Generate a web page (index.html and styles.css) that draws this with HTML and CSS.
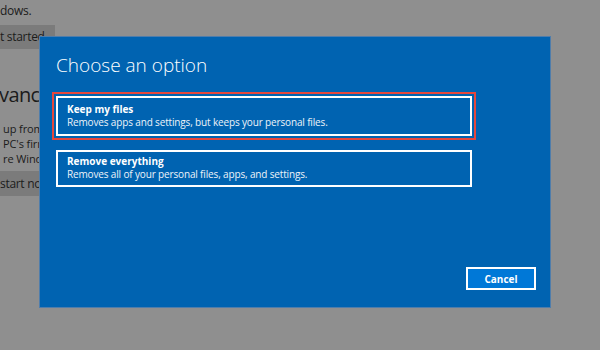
FILE: index.html
```html
<!DOCTYPE html>
<html>
<head>
<meta charset="utf-8">
<link rel="stylesheet" href="styles.css">
</head>
<body>
<div class="page">
  <p class="line">dows.</p>
  <div class="btn-row"><span class="gray-btn">t started</span></div>
  <h2 class="heading">vance</h2>
  <p class="para">up from<br>PC's firm<br>re Wind</p>
  <div class="btn-row2"><span class="gray-btn2">start now</span></div>
</div>

<div class="dialog">
  <h1 class="title">Choose an option</h1>
  <div class="focus-ring">
    <div class="option first">
      <div class="opt-title">Keep my files</div>
      <div class="opt-desc">Removes apps and settings, but keeps your personal files.</div>
    </div>
  </div>
  <div class="option second">
    <div class="opt-title">Remove everything</div>
    <div class="opt-desc">Removes all of your personal files, apps, and settings.</div>
  </div>
  <div class="footer">
    <button class="cancel">Cancel</button>
  </div>
</div>
</body>
</html>
```

FILE: styles.css
```css
html, body {
  margin: 0;
  padding: 0;
  width: 600px;
  height: 350px;
  overflow: hidden;
}
body {
  background: #8f8f8f;
  font-family: "Open Sans", "Noto Sans", sans-serif;
  color: #1b1b1b;
  position: relative;
}
.page {
  width: 60px;
  overflow: hidden;
  display: flex;
  flex-direction: column;
  align-items: flex-start;
}
.line {
  margin: 3px 0 0;
  font-size: 12px;
  line-height: 15px;
  letter-spacing: -0.3px;
  white-space: nowrap;
}
.btn-row {
  margin-top: 6px;
}
.gray-btn {
  display: inline-block;
  background: #7b7b7b;
  font-size: 12px;
  line-height: 15px;
  letter-spacing: -0.3px;
  padding: 4px 10px 5px 0;
  white-space: nowrap;
}
.heading {
  margin: 32px 0 0 -1px;
  font-size: 20px;
  line-height: 28px;
  font-weight: 400;
  letter-spacing: -0.6px;
  white-space: nowrap;
}
.para {
  margin: 12px 0 0 3px;
  font-size: 11px;
  line-height: 15px;
  letter-spacing: -0.1px;
  white-space: nowrap;
}
.btn-row2 {
  margin-top: 5px;
}
.gray-btn2 {
  display: inline-block;
  background: #7b7b7b;
  font-size: 12px;
  line-height: 15px;
  letter-spacing: -0.3px;
  padding: 5px 30px 5px 0;
  white-space: nowrap;
}

.dialog {
  position: absolute;
  left: 39px;
  top: 36px;
  width: 512px;
  height: 272px;
  box-sizing: border-box;
  background: #0063b1;
  border: 1px solid #4f7dab;
  display: flex;
  flex-direction: column;
  padding: 15px 14px 17px 12px;
  color: #fff;
}
.title {
  margin: 0 0 14px 4px;
  font-size: 19px;
  line-height: 26px;
  font-weight: 300;
  white-space: nowrap;
}
.focus-ring {
  width: 424px;
  box-sizing: border-box;
  border: 2px solid #e6473c;
  padding: 2px;
}
.option {
  box-sizing: border-box;
  width: 416px;
  border: 2px solid #ffffff;
  padding: 5px 9px;
}
.option.second {
  margin: 10px 0 0 4px;
  padding: 3px 9px 4px;
}
.opt-title {
  font-size: 10px;
  line-height: 13px;
  font-weight: 700;
  white-space: nowrap;
}
.opt-desc {
  font-size: 10px;
  line-height: 13px;
  letter-spacing: -0.15px;
  color: #eef3f9;
  white-space: nowrap;
}
.footer {
  margin-top: auto;
  display: flex;
  justify-content: flex-end;
}
.cancel {
  width: 70px;
  height: 23px;
  box-sizing: border-box;
  background: #0078d7;
  border: 2px solid #ffffff;
  color: #fff;
  font-family: "Open Sans", "Noto Sans", sans-serif;
  font-size: 10px;
  font-weight: 700;
  padding: 0;
}
```
